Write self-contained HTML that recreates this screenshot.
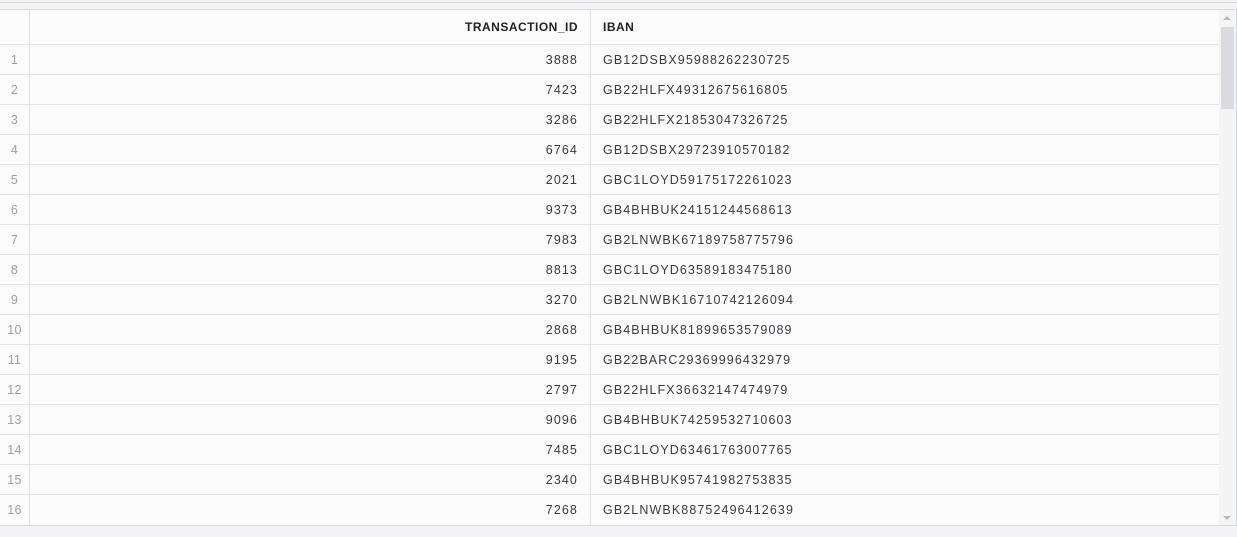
<!DOCTYPE html>
<html><head><style>
*{margin:0;padding:0;box-sizing:border-box}
body{width:1237px;height:537px;background:#f4f4f6;position:relative;overflow:hidden;font-family:"Liberation Sans",sans-serif}
.top{position:absolute;left:0;width:1237px;height:2px;border-bottom:1px solid #dcdce2;top:1px}
.grid{position:absolute;left:0;top:9px;width:1237px;height:517px;background:#fbfbfb;border-top:1px solid #dcdce2;border-bottom:1px solid #d6d6e0;border-right:1px solid #d6d6e0;overflow:hidden}
.row{position:absolute;left:0;width:1219px;height:30px;border-bottom:1px solid #e3e3e6;font-size:12.5px;color:#3a3a44;letter-spacing:1.1px}
.row div{position:absolute;top:0;height:30px;line-height:30px}
.n{left:0;width:30px;text-align:center;color:#9a9eb0;border-right:1px solid #e3e3e6;letter-spacing:0.3px}
.a{left:30px;width:561px;text-align:right;padding-right:12px;border-right:1px solid #e3e3e6}
.b{left:591px;padding-left:12px}
.h{height:35px;font-weight:bold;font-size:12px;color:#222;letter-spacing:0.5px}
.h div{height:35px;line-height:35px}
.sb{position:absolute;left:1219px;top:0;width:17px;height:516px;background:#f4f4f4}
.th{position:absolute;left:2px;top:17px;width:13px;height:82px;background:#dadadf}
.up{position:absolute;left:4px;top:6px;border:4px solid transparent;border-bottom:4px solid #b8b8be;border-top:0;width:0}
.dn{position:absolute;left:4px;bottom:6px;border:4px solid transparent;border-top:4px solid #b8b8be;border-bottom:0;width:0}
</style></head><body>
<div class="top"></div>
<div class="grid">
<div class="row h" style="top:0"><div class="n"></div><div class="a">TRANSACTION_ID</div><div class="b">IBAN</div></div>
<div class="row" style="top:35px"><div class="n">1</div><div class="a">3888</div><div class="b">GB12DSBX95988262230725</div></div>
<div class="row" style="top:65px"><div class="n">2</div><div class="a">7423</div><div class="b">GB22HLFX49312675616805</div></div>
<div class="row" style="top:95px"><div class="n">3</div><div class="a">3286</div><div class="b">GB22HLFX21853047326725</div></div>
<div class="row" style="top:125px"><div class="n">4</div><div class="a">6764</div><div class="b">GB12DSBX29723910570182</div></div>
<div class="row" style="top:155px"><div class="n">5</div><div class="a">2021</div><div class="b">GBC1LOYD59175172261023</div></div>
<div class="row" style="top:185px"><div class="n">6</div><div class="a">9373</div><div class="b">GB4BHBUK24151244568613</div></div>
<div class="row" style="top:215px"><div class="n">7</div><div class="a">7983</div><div class="b">GB2LNWBK67189758775796</div></div>
<div class="row" style="top:245px"><div class="n">8</div><div class="a">8813</div><div class="b">GBC1LOYD63589183475180</div></div>
<div class="row" style="top:275px"><div class="n">9</div><div class="a">3270</div><div class="b">GB2LNWBK16710742126094</div></div>
<div class="row" style="top:305px"><div class="n">10</div><div class="a">2868</div><div class="b">GB4BHBUK81899653579089</div></div>
<div class="row" style="top:335px"><div class="n">11</div><div class="a">9195</div><div class="b">GB22BARC29369996432979</div></div>
<div class="row" style="top:365px"><div class="n">12</div><div class="a">2797</div><div class="b">GB22HLFX36632147474979</div></div>
<div class="row" style="top:395px"><div class="n">13</div><div class="a">9096</div><div class="b">GB4BHBUK74259532710603</div></div>
<div class="row" style="top:425px"><div class="n">14</div><div class="a">7485</div><div class="b">GBC1LOYD63461763007765</div></div>
<div class="row" style="top:455px"><div class="n">15</div><div class="a">2340</div><div class="b">GB4BHBUK95741982753835</div></div>
<div class="row" style="top:485px;border-bottom:none"><div class="n">16</div><div class="a">7268</div><div class="b">GB2LNWBK88752496412639</div></div>
<div class="sb"><div class="up"></div><div class="th"></div><div class="dn"></div></div>
</div>
</body></html>
